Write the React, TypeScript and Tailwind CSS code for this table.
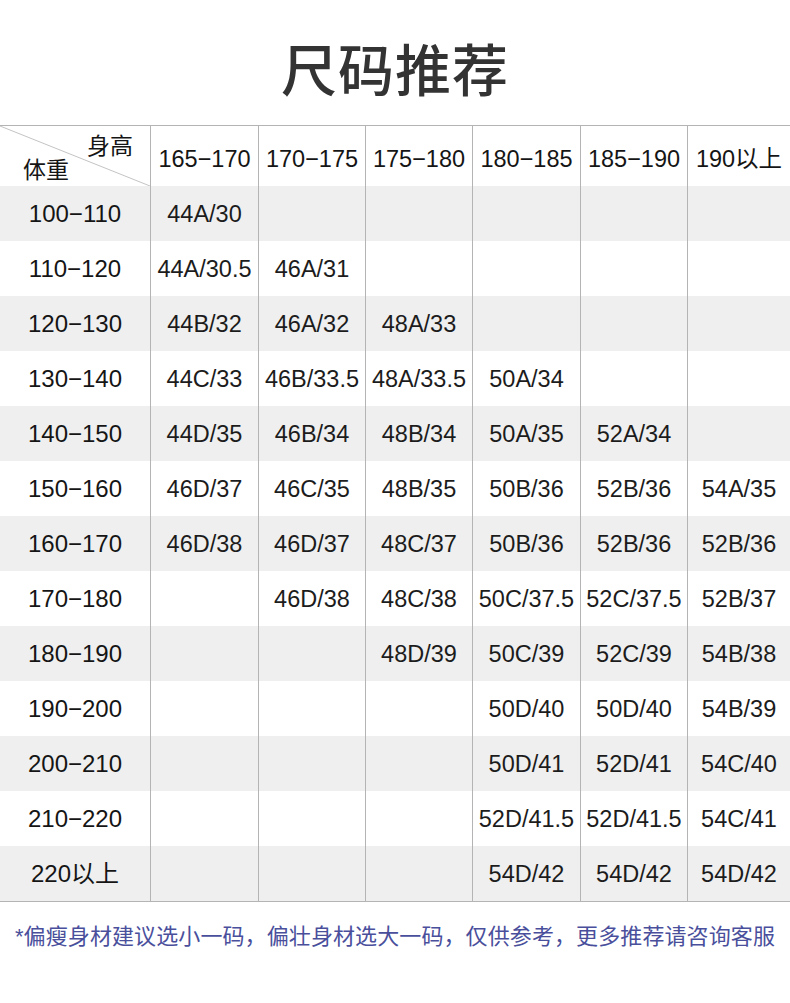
import React from "react";

const heights = ["165−170", "170−175", "175−180", "180−185", "185−190", "190以上"];

const rows: [string, string[]][] = [
  ["100−110", ["44A/30", "", "", "", "", ""]],
  ["110−120", ["44A/30.5", "46A/31", "", "", "", ""]],
  ["120−130", ["44B/32", "46A/32", "48A/33", "", "", ""]],
  ["130−140", ["44C/33", "46B/33.5", "48A/33.5", "50A/34", "", ""]],
  ["140−150", ["44D/35", "46B/34", "48B/34", "50A/35", "52A/34", ""]],
  ["150−160", ["46D/37", "46C/35", "48B/35", "50B/36", "52B/36", "54A/35"]],
  ["160−170", ["46D/38", "46D/37", "48C/37", "50B/36", "52B/36", "52B/36"]],
  ["170−180", ["", "46D/38", "48C/38", "50C/37.5", "52C/37.5", "52B/37"]],
  ["180−190", ["", "", "48D/39", "50C/39", "52C/39", "54B/38"]],
  ["190−200", ["", "", "", "50D/40", "50D/40", "54B/39"]],
  ["200−210", ["", "", "", "50D/41", "52D/41", "54C/40"]],
  ["210−220", ["", "", "", "52D/41.5", "52D/41.5", "54C/41"]],
  ["220以上", ["", "", "", "54D/42", "54D/42", "54D/42"]],
];

export default function App() {
  return (
    <div
      className="w-[790px] h-[1003px] bg-white text-[#151515]"
      style={{ fontFamily: '"Liberation Sans", "Noto Sans CJK SC", sans-serif' }}
    >
      <div className="h-[125px] flex items-center justify-center pt-[8px]">
        <h1
          className="text-[56px] leading-none font-medium text-[#333333] tracking-[1px]"
          style={{ fontFamily: '"Noto Sans CJK SC", sans-serif' }}
        >
          尺码推荐
        </h1>
      </div>
      <div className="border-t border-b border-[#b4b4b4]">
        <div className="grid grid-cols-[150px_108px_107px_107px_108px_107px_103px]">
          <div className="relative h-[60px]">
            <svg className="absolute inset-0" width="150" height="60" viewBox="0 0 150 60">
              <line x1="0" y1="0" x2="150" y2="60" stroke="#c4c4c4" strokeWidth="1" />
            </svg>
            <span className="absolute left-[87px] top-[9px] text-[23px] leading-none">身高</span>
            <span className="absolute left-[23px] top-[33px] text-[23px] leading-none">体重</span>
          </div>
          {heights.map((h) => (
            <div
              key={h}
              className="h-[60px] border-l border-[#b4b4b4] flex items-center justify-center pt-[8px] text-[23.5px] whitespace-nowrap"
            >
              {h}
            </div>
          ))}
          {rows.map(([w, cells], i) => (
            <React.Fragment key={w}>
              <div
                className={`h-[55px] flex items-center justify-center text-[24px] whitespace-nowrap ${
                  i % 2 === 0 ? "bg-[#efefef]" : "bg-white"
                }`}
              >
                {w}
              </div>
              {cells.map((c, j) => (
                <div
                  key={j}
                  className={`h-[55px] border-l border-[#b4b4b4] flex items-center justify-center pt-[2px] text-[23.5px] text-[#1c1c1c] whitespace-nowrap ${
                    i % 2 === 0 ? "bg-[#efefef]" : "bg-white"
                  }`}
                >
                  {c}
                </div>
              ))}
            </React.Fragment>
          ))}
        </div>
      </div>
      <p
        className="pt-[24px] text-center text-[22px] leading-[22px] tracking-[0.1px] text-[#4a4f9c]"
        style={{ fontFamily: '"Liberation Sans", "Noto Sans CJK SC", sans-serif' }}
      >
        *偏瘦身材建议选小一码，偏壮身材选大一码，仅供参考，更多推荐请咨询客服
      </p>
    </div>
  );
}
